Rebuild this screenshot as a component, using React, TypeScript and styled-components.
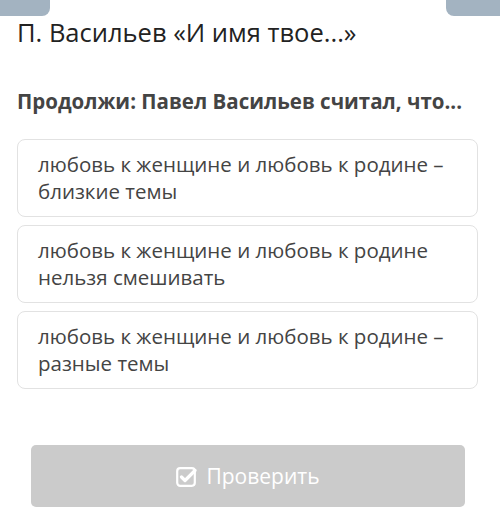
import React from 'react';
import styled, { createGlobalStyle } from 'styled-components';

const GlobalStyle = createGlobalStyle`
  html, body {
    margin: 0;
    padding: 0;
    background: #fff;
  }
  body {
    font-family: "Open Sans", "Noto Sans", sans-serif;
    width: 500px;
    height: 515px;
    overflow: hidden;
  }
`;

const Page = styled.div`
  display: flex;
  flex-direction: column;
  width: 500px;
`;

const TopBar = styled.div`
  display: flex;
  justify-content: space-between;
  height: 16px;
`;

const Tab = styled.div<{ $side: 'left' | 'right' }>`
  width: ${(p) => (p.$side === 'left' ? 50 : 54)}px;
  height: 16px;
  background: #a3b3c1;
  border-radius: ${(p) => (p.$side === 'left' ? '0 0 8px 0' : '0 0 0 8px')};
`;

const Content = styled.div`
  display: flex;
  flex-direction: column;
  padding: 0 22px 0 17px;
`;

const Title = styled.h1`
  margin: 0;
  font-size: 25.5px;
  font-weight: 400;
  line-height: 32px;
  color: #222;
`;

const Question = styled.h2`
  margin: 40px 0 0;
  font-size: 20.5px;
  font-weight: 700;
  line-height: 26px;
  color: #444;
  white-space: nowrap;
`;

const Options = styled.div`
  display: flex;
  flex-direction: column;
  gap: 8px;
  margin-top: 25px;
`;

const Option = styled.div`
  border: 1px solid #e2e2e2;
  border-radius: 8px;
  padding: 11px 20px 11px;
  font-size: 20.5px;
  line-height: 27px;
  color: #444;
  background: #fff;
`;

const CheckButton = styled.button`
  display: flex;
  align-items: center;
  justify-content: center;
  gap: 9px;
  margin: 56px 13px 0 14px;
  height: 62px;
  border: none;
  border-radius: 5px;
  background: #cbcbcb;
  color: #fff;
  font-family: inherit;
  font-size: 21px;
`;

const CheckIcon = () => (
  <svg width="21" height="21" viewBox="0 0 21 21" fill="none" stroke="#fff">
    <rect x="1.2" y="2.2" width="17.6" height="17.6" rx="3" strokeWidth="2.2" />
    <path d="M5.5 11l3.5 3.5L19 4.5" strokeWidth="3.2" strokeLinecap="round" strokeLinejoin="round" />
  </svg>
);

const options = [
  'любовь к женщине и любовь к родине – близкие темы',
  'любовь к женщине и любовь к родине нельзя смешивать',
  'любовь к женщине и любовь к родине – разные темы',
];

const App: React.FC = () => (
  <>
    <GlobalStyle />
    <Page>
      <TopBar>
        <Tab $side="left" />
        <Tab $side="right" />
      </TopBar>
      <Content>
        <Title>П. Васильев «И имя твое...»</Title>
        <Question>Продолжи: Павел Васильев считал, что...</Question>
        <Options>
          {options.map((o) => (
            <Option key={o}>{o}</Option>
          ))}
        </Options>
        <CheckButton>
          <CheckIcon />
          Проверить
        </CheckButton>
      </Content>
    </Page>
  </>
);

export default App;
